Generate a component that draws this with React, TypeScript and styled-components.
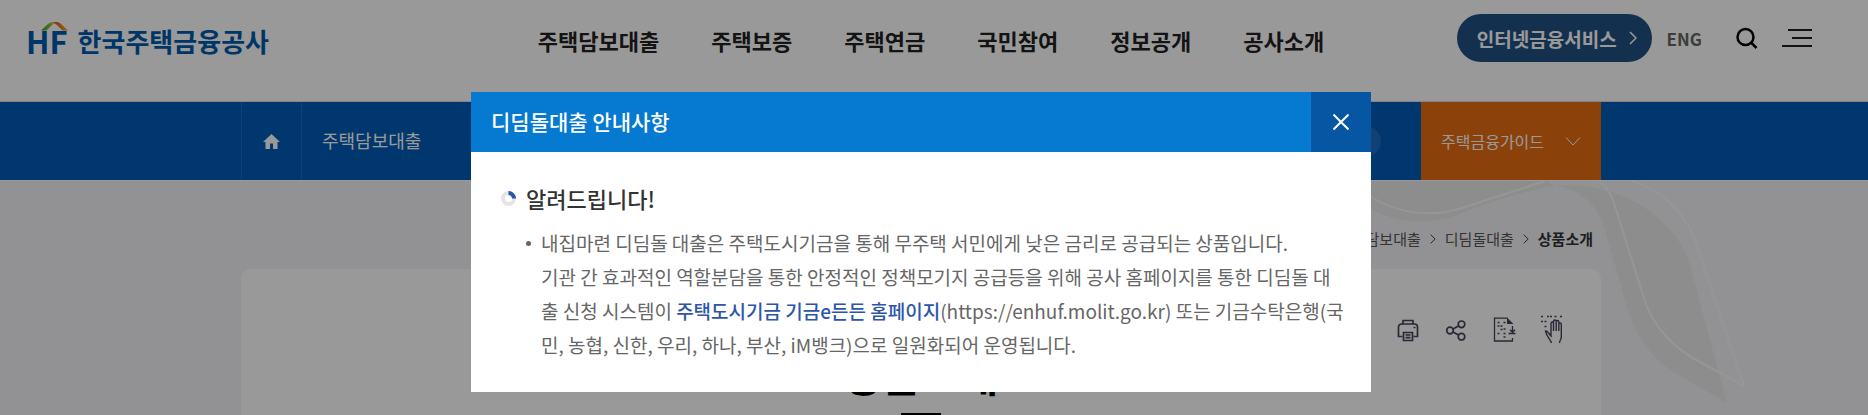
import React from "react";
import styled, { createGlobalStyle } from "styled-components";

const GlobalStyle = createGlobalStyle`
  * { box-sizing: border-box; }
  html, body { margin: 0; height: 100%; overflow: hidden; }
  body { font-family: "Noto Sans CJK KR", sans-serif; background: #f4f4f7; color: #222; }
  a { color: inherit; text-decoration: none; }
  button { font: inherit; border: 0; padding: 0; background: none; cursor: pointer; }
  h1, h2, h3, p, ul { margin: 0; padding: 0; }
  ul { list-style: none; }
  svg { display: block; }
`;

const Header = styled.header`
  display: grid;
  grid-template-columns: 1fr auto 1fr;
  align-items: start;
  height: 102px;
  padding: 0 56px 0 26px;
  background: #fff;
  border-bottom: 1px solid #ddd;
`;

const Logo = styled.a`
  display: flex;
  align-items: flex-end;
  gap: 10px;
  margin-top: 21px;
  color: #005bac;
  font-weight: 700;
  line-height: 40px;
`;

const LogoMark = styled.span`
  position: relative;
  font-size: 31px;
  svg { position: absolute; left: 15px; top: 1px; }
`;

const LogoName = styled.span`
  font-size: 26px;
`;

const MainNav = styled.nav`
  display: flex;
  gap: 52px;
  padding: 24px 0 0 24px;
  font-size: 22px;
  font-weight: 700;
  line-height: 32px;
`;

const Tools = styled.div`
  display: flex;
  align-items: center;
  justify-content: flex-end;
  padding-top: 14px;
`;

const ServiceLink = styled.a`
  display: flex;
  align-items: center;
  gap: 12px;
  height: 48px;
  padding: 0 15px 0 20px;
  border-radius: 24px;
  background: #215084;
  color: #fff;
  font-size: 19px;
  font-weight: 700;
`;

const Language = styled.a`
  margin: 0 34px 0 15px;
  color: #666;
  font-size: 17px;
  font-weight: 700;
`;

const ToolButton = styled.button`
  margin-right: 24px;
  &:last-child { margin-right: 0; }
`;

const Band = styled.div<{ $tone: "blue" | "light" }>`
  position: relative;
  padding-right: 26px;
  background: ${(p) => (p.$tone === "blue" ? "#005cb8" : "#f4f4f7")};
  border-top: ${(p) => (p.$tone === "light" ? "1px solid #fff" : "0")};
`;

const Inner = styled.div`
  position: relative;
  width: calc(100% - 40px);
  max-width: 1360px;
  margin: 0 auto;
`;

const SubBar = styled(Inner)`
  display: flex;
  height: 78px;
  color: #fff;
`;

const HomeLink = styled.a`
  display: flex;
  align-items: center;
  justify-content: center;
  width: 61px;
  border: solid #1a6dbf;
  border-width: 0 1px;
`;

const SubMenu = styled.a`
  flex: 1;
  padding-left: 20px;
  font-size: 18px;
  line-height: 76px;
`;

const RoundButton = styled.button`
  align-self: center;
  width: 31px;
  height: 31px;
  margin-right: 40px;
  border-radius: 50%;
  background: #1a6dbf;
`;

const GuideButton = styled.button`
  display: flex;
  align-items: center;
  justify-content: space-between;
  width: 180px;
  padding: 0 20px;
  background: #e86e12;
  color: #fff;
  font-size: 16px;
`;

const Ribbon = styled.svg`
  position: absolute;
  top: 0;
  right: 0;
`;

const Breadcrumb = styled.nav`
  display: flex;
  justify-content: flex-end;
  align-items: flex-start;
  gap: 9px;
  height: 88px;
  padding: 46px 8px 0 0;
  font-size: 15px;
  line-height: 24px;
  color: #555;
  svg { margin-top: 7px; }
  strong { color: #333; }
`;

const Card = styled.main`
  height: 400px;
  border-radius: 10px;
  background: #fff;
`;

const Actions = styled.div`
  display: flex;
  justify-content: flex-end;
  gap: 16px;
  padding: 45px 33px 0 0;
`;

const PageTitle = styled.h1`
  padding-top: 3px;
  color: #000;
  font-size: 42px;
  line-height: 50px;
  text-align: center;
  &::after {
    content: "";
    display: block;
    width: 40px;
    height: 3px;
    margin: 14px auto 0;
    background: #000;
  }
`;

const Overlay = styled.div`
  position: fixed;
  inset: 0;
  display: flex;
  justify-content: center;
  align-items: flex-start;
  padding: 92px 26px 0 0;
  background: rgba(0, 0, 0, 0.4);
`;

const Dialog = styled.section`
  width: 900px;
  max-width: 100%;
  background: #fff;
`;

const DialogHead = styled.header`
  display: flex;
  justify-content: space-between;
  height: 60px;
  padding-left: 20px;
  background: #057ad0;
  color: #fff;
`;

const DialogTitle = styled.h2`
  font-size: 21px;
  font-weight: 500;
  line-height: 58px;
`;

const CloseButton = styled.button`
  display: flex;
  align-items: center;
  justify-content: center;
  width: 60px;
  background: #0656a3;
`;

const DialogBody = styled.div`
  padding: 30px 20px 30px 30px;
`;

const NoticeTitle = styled.h3`
  display: flex;
  align-items: center;
  gap: 10px;
  color: #333;
  font-size: 22px;
  font-weight: 500;
  line-height: 32px;
`;

const Notice = styled.li`
  display: flex;
  gap: 10px;
  margin: 12px 0 0 25px;
  color: #666;
  font-size: 19px;
  line-height: 34px;
  &::before {
    content: "";
    flex: none;
    width: 5px;
    height: 5px;
    margin-top: 15px;
    border-radius: 50%;
    background: #666;
  }
  a { color: #2d56a8; font-weight: 500; }
`;

const menus = ["주택담보대출", "주택보증", "주택연금", "국민참여", "정보공개", "공사소개"];

const Chevron = () => (
  <svg width="6" height="10" viewBox="0 0 6 10" fill="none" stroke="#444">
    <path d="M.7.7 5.2 5 .7 9.3" />
  </svg>
);

const ink = { fill: "none", stroke: "#454358", strokeWidth: 1.7 };

const PrintIcon = () => (
  <svg width="32" height="32" viewBox="0 0 32 32" {...ink}>
    <path d="M11 10V6.500h10V10M10.500 22.500H6.500V13a3 3 0 0 1 3-3h13a3 3 0 0 1 3 3v9.500h-4" />
    <path d="M11.500 18.500h9v8h-9zM13.500 21h5M13.500 23.700h5M21.500 13.500h2" />
  </svg>
);

const ShareIcon = () => (
  <svg width="32" height="32" viewBox="0 0 32 32" {...ink}>
    <circle cx="10" cy="16.500" r="3.300" />
    <circle cx="21.500" cy="10.300" r="3.300" />
    <circle cx="21.500" cy="22.700" r="3.300" />
    <path d="m13 15 5.500-3M13 18l5.500 3" />
  </svg>
);

const BrailleFileIcon = () => (
  <svg width="32" height="32" viewBox="0 0 32 32" {...ink}>
    <path d="M24.500 24v3H6.500V4.200h13" strokeWidth="1.300" />
    <path d="M19 3.500v6.500h6.500z" fill="#454358" stroke="none" />
    <path d="M24.500 12v6M22 15.800l2.500 2.500 2.500-2.500M20.500 19.500h7" strokeWidth="1.300" />
    <path d="M9.500 8.500h2M15.500 8.500h2M9.500 12h2M12.500 12h2M15.500 15h2M12.500 15.500h2M9.500 19.500h2M15.500 19.500h2M15.500 23h2" />
  </svg>
);

const BrailleHandIcon = () => (
  <svg width="32" height="32" viewBox="0 0 32 32" {...ink}>
    <path d="M5 2.500h2M11 2.500h2M14 2.500h2M18.500 2.500h2M24 2.500h2M5 7.500h2M8.500 7.500h2M8.500 12.500h2" />
    <path
      strokeWidth="1.400"
      d="M15.500 29c-1-4-4.500-5-6-12 2-.8 3.500 3 5.500 5V9.500c0-2 2.500-2 2.500 0V17 7.500c0-2 2.700-2 2.700 0V17 8c0-2 2.600-2 2.600 0v9-6.500c0-2 2.500-2 2.500 0V23c0 3-1.800 3-1.800 6"
    />
  </svg>
);

export default function App() {
  return (
    <>
      <GlobalStyle />
      <Header>
        <Logo href="#">
          <LogoMark>
            HF
            <svg width="27" height="9" viewBox="0 0 27 9">
              <defs>
                <linearGradient id="leaf">
                  <stop stopColor="#2f9b3c" />
                  <stop offset="1" stopColor="#d8d82a" />
                </linearGradient>
                <linearGradient id="sun">
                  <stop stopColor="#e8501e" />
                  <stop offset="1" stopColor="#f5a81c" />
                </linearGradient>
              </defs>
              <path d="M0 8.500 7 2Q9 0 12 0h3L13 1.500Q12 2 11 3L5.500 8.500z" fill="url(#leaf)" />
              <path d="M13 0h3q2 0 4 2l7 6.500h-5.500L16 3q-1-1-3-2z" fill="url(#sun)" />
            </svg>
          </LogoMark>
          <LogoName>한국주택금융공사</LogoName>
        </Logo>
        <MainNav>
          {menus.map((menu) => (
            <a href="#" key={menu}>{menu}</a>
          ))}
        </MainNav>
        <Tools>
          <ServiceLink href="#">
            인터넷금융서비스
            <svg width="8" height="14" viewBox="0 0 8 14" fill="none" stroke="#fff" strokeWidth="1.500">
              <path d="m1 1 6 6-6 6" />
            </svg>
          </ServiceLink>
          <Language href="#">ENG</Language>
          <ToolButton aria-label="검색">
            <svg width="22" height="22" viewBox="0 0 22 22" fill="none" stroke="#000" strokeWidth="2.500">
              <circle cx="9.500" cy="10" r="8" />
              <path d="m15 15.500 5.500 5.500" />
            </svg>
          </ToolButton>
          <ToolButton aria-label="전체메뉴">
            <svg width="30" height="18" viewBox="0 0 30 18">
              <path d="M6 1h24M10 9h20M0 17h30" stroke="#222" strokeWidth="2" />
            </svg>
          </ToolButton>
        </Tools>
      </Header>

      <Band $tone="blue">
        <SubBar>
          <HomeLink href="#" aria-label="홈">
            <svg width="17" height="15" viewBox="0 0 17 15">
              <path d="M8.500 0 17 8h-2.500v7H10V9.500H7V15H2.500V8H0z" fill="#fff" />
            </svg>
          </HomeLink>
          <SubMenu href="#">주택담보대출</SubMenu>
          <RoundButton aria-label="공유" />
          <GuideButton>
            주택금융가이드
            <svg width="16" height="9" viewBox="0 0 16 9" fill="none" stroke="#fff">
              <path d="m1 .5 7 7.500 7-7.500" />
            </svg>
          </GuideButton>
        </SubBar>
      </Band>

      <Band $tone="light">
        <Ribbon width="528" height="235" viewBox="0 11 528 235" fill="none">
          <path d="M0 10H205L215 16C180 22 150 32 120 44 85 58 50 50 31 39L0 15z" fill="#ebebec" />
          <path
            d="M215 16C275 10 335 45 350 95L387 233 335 203C310 187 294 162 288 140L262 50C254 32 235 17 215 16z"
            fill="#ebebec"
          />
          <path
            d="M0 5 31 27C60 45 95 47 122 38L205 11M255 8Q269 18 273 30L303 125C312 160 340 182 362 193L404 216 358 78C346 40 320 20 290 10"
            stroke="#fafafa"
            strokeWidth="2"
          />
        </Ribbon>
        <Inner>
          <Breadcrumb aria-label="현재 위치">
            <a href="#">주택담보대출</a>
            <Chevron />
            <a href="#">디딤돌대출</a>
            <Chevron />
            <strong>상품소개</strong>
          </Breadcrumb>
          <Card>
            <Actions>
              <button aria-label="인쇄"><PrintIcon /></button>
              <button aria-label="공유하기"><ShareIcon /></button>
              <button aria-label="점자 파일"><BrailleFileIcon /></button>
              <button aria-label="점자 보기"><BrailleHandIcon /></button>
            </Actions>
            <PageTitle>상품소개</PageTitle>
          </Card>
        </Inner>
      </Band>

      <Overlay>
        <Dialog role="dialog" aria-modal="true" aria-labelledby="dialog-title">
          <DialogHead>
            <DialogTitle id="dialog-title">디딤돌대출 안내사항</DialogTitle>
            <CloseButton aria-label="닫기">
              <svg width="16" height="16" viewBox="0 0 16 16" stroke="#fff" strokeWidth="2">
                <path d="m.5.5 15 15M15.500.5l-15 15" />
              </svg>
            </CloseButton>
          </DialogHead>
          <DialogBody>
            <NoticeTitle>
              <svg width="15" height="15" viewBox="0 0 15 15" fill="none" strokeWidth="4">
                <circle cx="7.500" cy="7.500" r="5.500" stroke="#e5e5e5" />
                <path d="M7.500 2A5.500 5.500 0 0 1 13 7.500" stroke="#2d56a8" />
              </svg>
              알려드립니다!
            </NoticeTitle>
            <ul>
              <Notice>
                <p>
                  내집마련 디딤돌 대출은 주택도시기금을 통해 무주택 서민에게 낮은 금리로 공급되는 상품입니다.
                  <br />
                  기관 간 효과적인 역할분담을 통한 안정적인 정책모기지 공급등을 위해 공사 홈페이지를 통한 디딤돌 대
                  <br />출 신청 시스템이 <a href="#">주택도시기금 기금e든든 홈페이지</a>
                  (https://enhuf.molit.go.kr) 또는 기금수탁은행(국
                  <br />
                  민, 농협, 신한, 우리, 하나, 부산, iM뱅크)으로 일원화되어 운영됩니다.
                </p>
              </Notice>
            </ul>
          </DialogBody>
        </Dialog>
      </Overlay>
    </>
  );
}
